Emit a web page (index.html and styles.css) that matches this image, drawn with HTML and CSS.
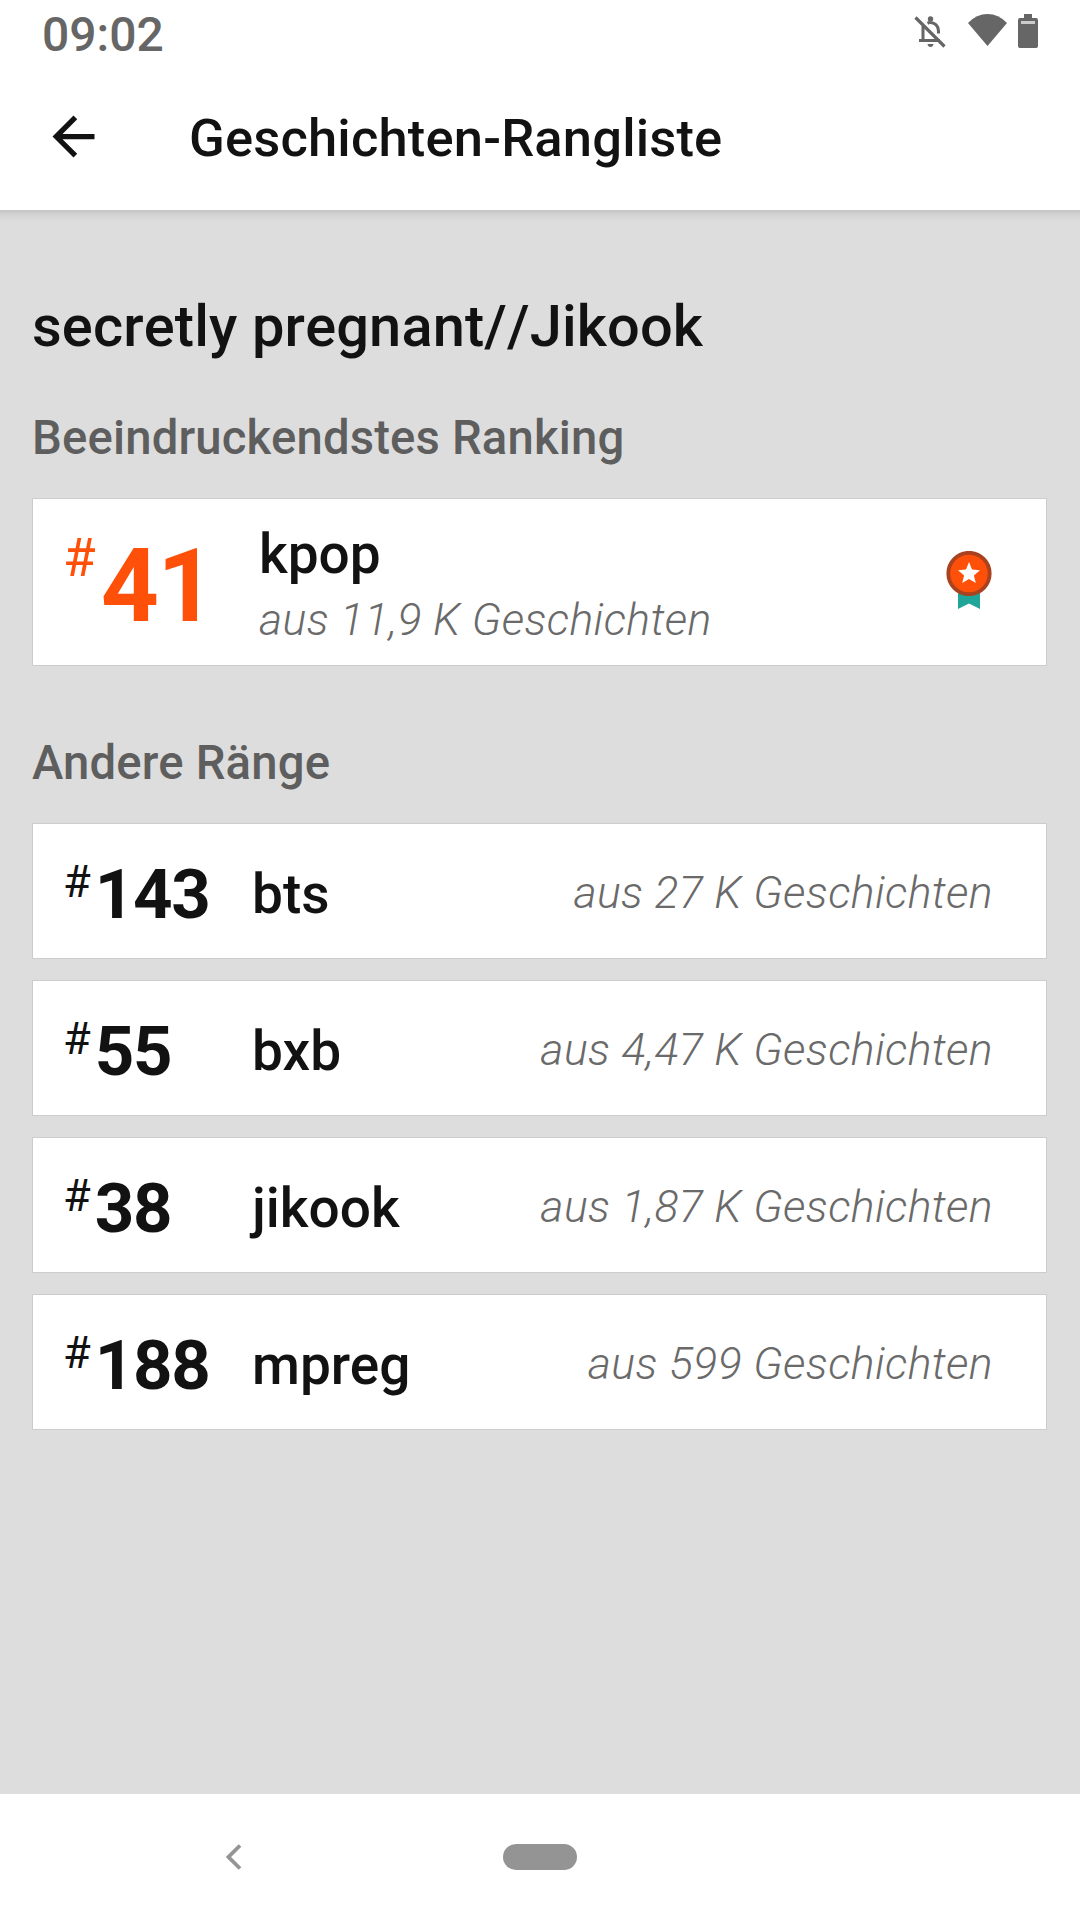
FILE: index.html
```html
<!DOCTYPE html>
<html lang="de">
  <head>
    <meta charset="utf-8">
    <title>Geschichten-Rangliste</title>
    <link rel="stylesheet" href="styles.css">
  </head>

  <body>
    <div class="status-bar">
      <span class="clock">09:02</span>
      <div class="status-icons">
        <svg class="bell" viewBox="0 0 32 34">
          <path d="M9 11V25M5 25.500H26M16 7.500C21 7.500 24.500 11 24.500 16V18.500M13.500 8.300L16 7" fill="none" stroke="#666" stroke-width="3"/>
          <circle cx="16.500" cy="4" r="2.700" fill="#666"/>
          <path d="M13.500 29H19.500Q19 32 16.500 32Q14 32 13.500 29Z" fill="#666"/>
          <path d="M1.500 2.500L30.500 31.500" stroke="#666" stroke-width="3.200"/>
        </svg>
        <svg class="wifi" viewBox="0 0 39 32">
          <path d="M19.500 32L0 9Q8.500 0 19.500 0T39 9Z" fill="#666"/>
        </svg>
        <svg class="battery" viewBox="0 0 20 34">
          <path d="M6 0H14V4H18Q20 4 20 6V32Q20 34 18 34H2Q0 34 0 32V6Q0 4 2 4H6Z" fill="#666"/>
          <path d="M3 7H17V10H3Z" fill="#ccc"/>
        </svg>
      </div>
    </div>

    <header class="app-bar">
      <svg class="back" viewBox="0 0 24 24">
        <path d="M20 11H7.830l5.590-5.590L12 4l-8 8 8 8 1.410-1.410L7.830 13H20v-2z" fill="#121212"/>
      </svg>
      <span class="page-title">Geschichten-Rangliste</span>
    </header>

    <main>
      <h1>secretly pregnant//Jikook</h1>

      <h2>Beeindruckendstes Ranking</h2>
      <div class="card best">
        <div class="rank"><span class="hash">#</span><span class="number">41</span></div>
        <div class="info">
          <div class="tag">kpop</div>
          <div class="count">aus 11,9 K Geschichten</div>
        </div>
        <svg class="badge" viewBox="0 0 46 58">
          <path d="M12 38H34V58L23 52.500L12 58Z" fill="#1fa698"/>
          <circle cx="23" cy="22.500" r="20.700" fill="#ff500a" stroke="#a9431f" stroke-width="3.800"/>
          <path d="M23 11L26 18.600L34 19.200L27.900 24.400L29.800 32L23 27.900L16.200 32L18.100 24.400L12 19.200L20 18.600Z" fill="#fff"/>
        </svg>
      </div>

      <h2>Andere Ränge</h2>
      <div class="list">
        <div class="card row">
          <div class="rank"><span class="hash">#</span><span class="number">143</span></div>
          <div class="tag">bts</div>
          <div class="count">aus 27 K Geschichten</div>
        </div>
        <div class="card row">
          <div class="rank"><span class="hash">#</span><span class="number">55</span></div>
          <div class="tag">bxb</div>
          <div class="count">aus 4,47 K Geschichten</div>
        </div>
        <div class="card row">
          <div class="rank"><span class="hash">#</span><span class="number">38</span></div>
          <div class="tag">jikook</div>
          <div class="count">aus 1,87 K Geschichten</div>
        </div>
        <div class="card row">
          <div class="rank"><span class="hash">#</span><span class="number">188</span></div>
          <div class="tag">mpreg</div>
          <div class="count">aus 599 Geschichten</div>
        </div>
      </div>
    </main>

    <nav class="nav-bar">
      <svg class="nav-back" viewBox="0 0 16 26">
        <path d="M14 1.500L2.500 13L14 24.500" fill="none" stroke="#949494" stroke-width="3.800"/>
      </svg>
      <div class="home-pill"></div>
      <div class="nav-space"></div>
    </nav>
  </body>
</html>
```
FILE: styles.css
```css
* {
  box-sizing: border-box;
}

body {
  margin: 0;
  width: 1080px;
  height: 1920px;
  display: flex;
  flex-direction: column;
  background-color: #fff;
  color: #121212;
  font-family: Roboto, "Liberation Sans", sans-serif;
  overflow: hidden;
}

.status-bar {
  height: 63px;
  display: flex;
  justify-content: space-between;
  padding: 0 42px;
}

.clock {
  color: #666;
  font-size: 48px;
  font-weight: 500;
  line-height: 69px;
}

.status-icons {
  display: flex;
  align-items: flex-start;
  padding-top: 14px;
}

.bell {
  width: 32px;
  height: 34px;
  margin-top: 1px;
  margin-right: 22px;
}

.wifi {
  width: 39px;
  height: 32px;
  margin-right: 11px;
}

.battery {
  width: 20px;
  height: 34px;
}

.app-bar {
  height: 147px;
  display: flex;
  align-items: center;
  padding-left: 42px;
}

.back {
  width: 63px;
  height: 63px;
}

.page-title {
  margin: 3px 0 0 84px;
  font-size: 52.5px;
  font-weight: 500;
  letter-spacing: 0.17px;
}

main {
  flex: 1;
  padding: 82px 33px 0 32px;
  background: linear-gradient(#c4c4c4, #d4d4d4 5px, #ddd 12px);
}

h1 {
  margin: 0 0 50px;
  font-size: 57.75px;
  font-weight: 500;
  line-height: 68px;
  letter-spacing: 0.14px;
  font-kerning: none;
}

h2 {
  margin: 0 0 32px;
  color: #5e5e5e;
  font-size: 47.25px;
  font-weight: 500;
  line-height: 56px;
  letter-spacing: 0.17px;
}

.card {
  display: flex;
  align-items: center;
  padding: 0 54px 0 30px;
  background-color: #fff;
  border: 1px solid #ccc;
}

.rank {
  display: flex;
  align-items: center;
}

.number {
  font-weight: 700;
}

.tag {
  font-size: 55px;
  font-weight: 500;
}

.count {
  color: #6a6a6a;
  font-size: 44.6px;
  font-style: italic;
  font-weight: 300;
  letter-spacing: 0.37px;
}

.best {
  height: 168px;
  margin-bottom: 69px;
}

.best .rank {
  width: 196px;
  color: #ff500a;
}

.best .hash {
  margin-bottom: 49px;
  font-size: 53px;
}

.best .number {
  margin: 8px 0 0 5px;
  font-size: 101.5px;
  letter-spacing: -1.5px;
}

.info {
  flex: 1;
  margin-top: 10px;
  line-height: 66px;
}

.badge {
  width: 46px;
  height: 58px;
  margin-bottom: 4px;
}

.list {
  display: flex;
  flex-direction: column;
  gap: 21px;
}

.row {
  height: 136px;
  padding-right: 53px;
}

.row .rank {
  width: 189px;
}

.row .hash {
  margin-bottom: 20px;
  font-size: 45px;
}

.row .number {
  margin: 6px 0 0 4px;
  font-size: 69px;
  letter-spacing: -1.3px;
}

.row .tag {
  flex: 1;
  margin-top: 5px;
}

.row .count {
  margin-top: 3px;
}

.nav-bar {
  height: 126px;
  display: flex;
  align-items: center;
  justify-content: space-between;
  padding: 0 226px;
}

.nav-back,
.nav-space {
  width: 16px;
  height: 26px;
}

.home-pill {
  width: 74px;
  height: 26px;
  border-radius: 13px;
  background-color: #949494;
}
```
